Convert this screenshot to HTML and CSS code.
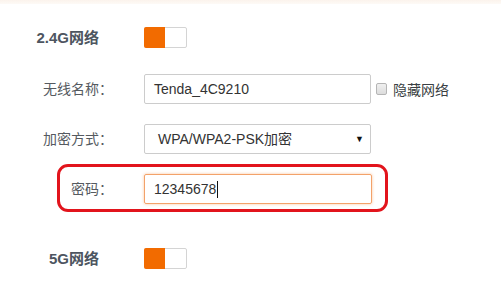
FILE: index.html
```html
<!DOCTYPE html>
<html lang="zh-CN">
<head>
<meta charset="utf-8">
<title>无线设置</title>
<link rel="stylesheet" href="styles.css">
</head>
<body>
<div class="topband"></div>
<main class="form">
  <div class="row head-row first">
    <div class="head-label">2.4G网络</div>
    <div class="toggle"><span class="toggle-on"></span></div>
  </div>

  <div class="row field-row ssid-row">
    <div class="label">无线名称：</div>
    <div class="input">Tenda_4C9210</div>
    <label class="check"><span class="box"></span><span>隐藏网络</span></label>
  </div>

  <div class="row field-row sec-row">
    <div class="label">加密方式：</div>
    <div class="input select"><span class="sel-text">WPA/WPA2-PSK加密</span><span class="arrow">▼</span></div>
  </div>

  <div class="row highlight">
    <div class="label short">密码：</div>
    <div class="input focus">12345678<span class="caret"></span></div>
  </div>

  <div class="row head-row last">
    <div class="head-label">5G网络</div>
    <div class="toggle"><span class="toggle-on"></span></div>
  </div>
</main>
</body>
</html>
```

FILE: styles.css
```css
* { box-sizing: border-box; }

html, body {
  margin: 0;
  padding: 0;
  background: #ffffff;
  font-family: "Liberation Sans", "Noto Sans CJK SC", sans-serif;
  font-size: 14px;
  color: #333333;
}

.topband {
  height: 4px;
  background: linear-gradient(#fbf3ec, #fdfaf6);
}

.form {
  display: flex;
  flex-direction: column;
}

.row {
  display: flex;
  align-items: center;
}

.head-row.first { margin-top: 23px; }
.ssid-row { margin-top: 26px; }
.sec-row { margin-top: 20px; }
.highlight { margin-top: 10px; }
.head-row.last { margin-top: 36px; }

.head-label {
  width: 99px;
  margin-right: 45px;
  text-align: right;
  font-size: 15px;
  font-weight: bold;
  color: #4d5560;
  line-height: 21px;
}

.toggle {
  width: 43px;
  height: 21px;
  border: 1px solid #d4d4d4;
  border-radius: 2px;
  background: #ffffff;
  display: flex;
}

.toggle-on {
  width: 21px;
  margin: -1px 0 -1px -1px;
  background: #f26b00;
  border-radius: 2px 0 0 2px;
}

.label {
  width: 113px;
  margin-right: 31px;
  text-align: right;
  color: #555a60;
  font-size: 14px;
  line-height: 30px;
}

.label.short {
  width: 53px;
}

.input {
  width: 227px;
  height: 30px;
  border: 1px solid #cccccc;
  border-radius: 2px;
  padding-left: 9px;
  line-height: 28px;
  font-size: 14px;
  color: #333333;
  display: flex;
  align-items: center;
}

.select {
  padding-left: 13px;
  padding-right: 6px;
  justify-content: space-between;
}

.arrow {
  font-size: 9px;
  color: #111111;
}

.check {
  display: flex;
  align-items: center;
  margin-left: 5px;
  color: #3a3f44;
}

.box {
  width: 11px;
  height: 12px;
  border: 1px solid #b5b5b5;
  border-radius: 2px;
  background: linear-gradient(#f0f0f0, #dcdcdc);
  margin-right: 6px;
}

.highlight {
  margin-left: 57px;
  width: 331px;
  height: 48px;
  border: 3px solid #e2141c;
  border-radius: 11px;
  padding: 7px 13px 5px 0;
}

.input.focus {
  width: 228px;
  border-color: #f3a26a;
  box-shadow: 0 0 3px rgba(242, 120, 30, 0.45);
}

.caret {
  display: inline-block;
  width: 1px;
  height: 17px;
  background: #111111;
  margin-left: 1px;
}
```
